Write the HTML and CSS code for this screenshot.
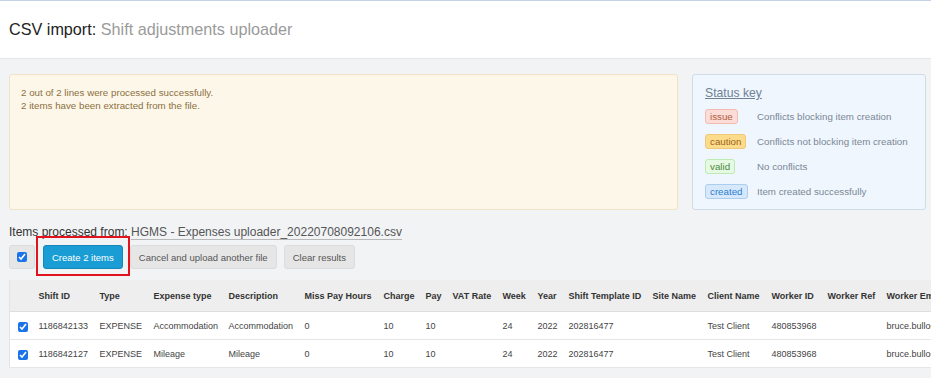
FILE: index.html
```html
<!DOCTYPE html>
<html lang="en">
<head>
   <meta charset="UTF-8">
   <meta name="viewport" content="width=device-width, initial-scale=1.0">
   <title>CSV import - Shift adjustments uploader</title>
   <link rel="stylesheet" href="styles.css">
</head>
<body>

   <header class="page-header">
      <h1>CSV import: <span class="subtitle">Shift adjustments uploader</span></h1>
   </header>

   <main class="content">

      <!-- summary + status key -->
      <div class="top-row">
         <div class="alert">
            <p>2 out of 2 lines were processed successfully.</p>
            <p>2 items have been extracted from the file.</p>
         </div>
         <div class="status-key">
            <h3>Status key</h3>
            <ul>
               <li><span class="badge badge-issue">issue</span><span>Conflicts blocking item creation</span></li>
               <li><span class="badge badge-caution">caution</span><span>Conflicts not blocking item creation</span></li>
               <li><span class="badge badge-valid">valid</span><span>No conflicts</span></li>
               <li><span class="badge badge-created">created</span><span>Item created successfully</span></li>
            </ul>
         </div>
      </div>

      <p class="processed">Items processed from: <span class="filename">HGMS - Expenses uploader_20220708092106.csv</span></p>

      <div class="actions">
         <button class="btn btn-check"><input type="checkbox" checked></button>
         <button class="btn btn-primary">Create 2 items</button>
         <button class="btn">Cancel and upload another file</button>
         <button class="btn">Clear results</button>
      </div>

      <div class="table-wrap">
         <table class="items">
            <colgroup>
               <col style="width:23px"><col style="width:61px"><col style="width:54px"><col style="width:75px">
               <col style="width:76px"><col style="width:79px"><col style="width:42px"><col style="width:27px">
               <col style="width:50px"><col style="width:35px"><col style="width:31px"><col style="width:84px">
               <col style="width:55px"><col style="width:64px"><col style="width:56px"><col style="width:59px">
               <col style="width:160px">
            </colgroup>
            <thead>
               <tr>
                  <th></th>
                  <th>Shift ID</th>
                  <th>Type</th>
                  <th>Expense type</th>
                  <th>Description</th>
                  <th>Miss Pay Hours</th>
                  <th>Charge</th>
                  <th>Pay</th>
                  <th>VAT Rate</th>
                  <th>Week</th>
                  <th>Year</th>
                  <th>Shift Template ID</th>
                  <th>Site Name</th>
                  <th>Client Name</th>
                  <th>Worker ID</th>
                  <th>Worker Ref</th>
                  <th>Worker Email</th>
               </tr>
            </thead>
            <tbody>
               <tr>
                  <td class="cb"><input type="checkbox" checked></td>
                  <td>1186842133</td>
                  <td>EXPENSE</td>
                  <td>Accommodation</td>
                  <td>Accommodation</td>
                  <td>0</td>
                  <td>10</td>
                  <td>10</td>
                  <td></td>
                  <td>24</td>
                  <td>2022</td>
                  <td>202816477</td>
                  <td></td>
                  <td>Test Client</td>
                  <td>480853968</td>
                  <td></td>
                  <td>bruce.bullock@example.com</td>
               </tr>
               <tr>
                  <td class="cb"><input type="checkbox" checked></td>
                  <td>1186842127</td>
                  <td>EXPENSE</td>
                  <td>Mileage</td>
                  <td>Mileage</td>
                  <td>0</td>
                  <td>10</td>
                  <td>10</td>
                  <td></td>
                  <td>24</td>
                  <td>2022</td>
                  <td>202816477</td>
                  <td></td>
                  <td>Test Client</td>
                  <td>480853968</td>
                  <td></td>
                  <td>bruce.bullock@example.com</td>
               </tr>
            </tbody>
         </table>
      </div>

   </main>

</body>
</html>
```

FILE: styles.css
```css
html, body {
   overflow: hidden;
}

body {
   font-family: "Liberation Sans", Arial, sans-serif;
   background-color: #f2f3f5;
   margin: 0;
   color: #333;
   border-top: 1px solid #c5d3e6;
}

.page-header {
   background-color: #fff;
   height: 57px;
   border-bottom: 1px solid #e6e7e9;
   display: flex;
   align-items: center;
   padding: 0 9px;
}

.page-header h1 {
   margin: 0;
   font-size: 16.2px;
   font-weight: normal;
   color: #222;
}

.subtitle {
   color: #9a9a9a;
}

.content {
   padding: 15px 5px 0 9px;
}

.top-row {
   display: grid;
   grid-template-columns: 1fr 234px;
   gap: 14px;
   height: 136px;
}

.alert {
   background-color: #fdf7ea;
   border: 1px solid #efe2c6;
   border-radius: 3px;
   padding: 11px 11px;
   font-size: 9.75px;
   line-height: 13px;
   color: #8c7040;
}

.alert p {
   margin: 0;
}

.status-key {
   background-color: #eff6fd;
   border: 1px solid #cfdbe6;
   border-radius: 3px;
   padding: 11px 12px 4px;
   color: #7b8896;
   overflow: hidden;
}

.status-key h3 {
   margin: 0 0 4px;
   font-size: 12.2px;
   font-weight: normal;
   text-decoration: underline;
   color: #6f8195;
   line-height: 14px;
}

.status-key ul {
   list-style: none;
   margin: 0;
   padding: 0;
}

.status-key li {
   display: grid;
   grid-template-columns: 52px 1fr;
   align-items: center;
   justify-items: start;
   height: 25px;
   font-size: 9.75px;
   white-space: nowrap;
}

.badge {
   display: inline-block;
   padding: 1px 4px;
   border-radius: 3px;
   border: 1px solid;
   font-size: 9.75px;
   line-height: 11px;
}

.badge-issue {
   background-color: #fbdcd6;
   border-color: #f2bcb2;
   color: #b05a42;
}

.badge-caution {
   background-color: #fddb8c;
   border-color: #efc779;
   color: #9a6418;
}

.badge-valid {
   background-color: #e6f9e2;
   border-color: #bde9b3;
   color: #4d8a40;
}

.badge-created {
   background-color: #d7e8fb;
   border-color: #abcdf0;
   color: #2b7ed2;
}

.processed {
   margin: 15px 0 0;
   font-size: 12px;
   line-height: 15px;
   color: #333;
}

.filename {
   color: #555;
   border-bottom: 1px solid #b8b8b8;
}

.actions {
   display: flex;
   gap: 7px;
   margin-top: 5px;
   height: 24px;
}

.btn {
   font-family: "Liberation Sans", Arial, sans-serif;
   font-size: 9.5px;
   height: 24px;
   padding: 0 8px;
   background-color: #e6e6e6;
   border: 1px solid #dcdcdc;
   border-radius: 3px;
   color: #555;
   white-space: nowrap;
   cursor: pointer;
}

.btn-check {
   width: 26px;
   padding: 0;
   display: flex;
   align-items: center;
   justify-content: center;
}

.btn input,
.items input {
   width: 10px;
   height: 10px;
   margin: 0;
   accent-color: #1a73e8;
}

.btn-primary {
   position: relative;
   margin-left: 1px;
   background-color: #199dd4;
   border-color: #1488bb;
   color: #fff;
}

/* red highlight drawn over the create button */
.btn-primary::after {
   content: "";
   position: absolute;
   top: -10px;
   bottom: -8px;
   left: -8px;
   right: -8px;
   border: 2px solid #e3131d;
}

.table-wrap {
   margin-top: 11px;
   margin-right: -5px;
   overflow: hidden;
}

.items {
   table-layout: fixed;
   width: 1031px;
   border-collapse: collapse;
   background-color: #fff;
   border-left: 1px solid #e3e3e3;
   font-size: 9px;
}

.items th,
.items td {
   padding: 0 6px;
   text-align: left;
   white-space: nowrap;
   overflow: hidden;
}

.items th {
   background-color: #eeeeee;
   height: 31px;
   font-weight: bold;
   color: #333;
   border-bottom: 1px solid #dedede;
}

.items td {
   height: 27px;
   color: #444;
   border-bottom: 1px solid #e6e6e6;
}

.items td.cb {
   padding: 0 0 0 8px;
}

.items td.cb input {
   display: block;
   margin-top: 2px;
}
```
